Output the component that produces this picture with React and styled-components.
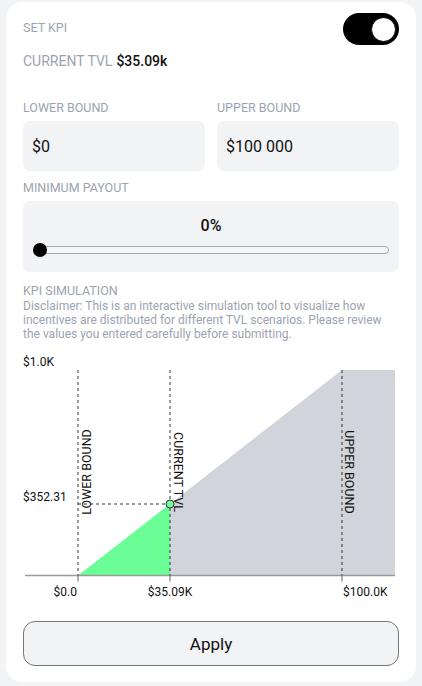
import React from 'react';
import styled, { createGlobalStyle } from 'styled-components';

const GlobalStyle = createGlobalStyle`
  html, body {
    margin: 0;
    padding: 0;
    background: #f2f3f5;
  }
  body {
    font-family: Roboto, "Noto Sans", Arial, sans-serif;
  }
`;

const Page = styled.div`
  padding: 2px 6px 4px;
`;

const Card = styled.div`
  box-sizing: border-box;
  width: 410px;
  background: #ffffff;
  border-radius: 16px;
  padding: 11px 17px 16px;
  display: flex;
  flex-direction: column;
`;

const HeaderRow = styled.div`
  display: flex;
  justify-content: space-between;
  align-items: flex-start;
`;

const Label = styled.div`
  font-size: 12.5px;
  line-height: 16px;
  color: #9ca3af;
  text-transform: uppercase;
  margin-top: ${p => p.$mt || 0}px;
`;

const Toggle = styled.div`
  box-sizing: border-box;
  width: 56px;
  height: 32px;
  border-radius: 16px;
  background: #000;
  display: flex;
  align-items: center;
  justify-content: ${p => (p.$on ? 'flex-end' : 'flex-start')};
  padding: 0 3px;
`;

const Knob = styled.div`
  box-sizing: border-box;
  width: 25px;
  height: 25px;
  border-radius: 50%;
  background: #fff;
  border: 1.5px solid #000;
`;

const TvlLine = styled.div`
  margin-top: 6px;
  font-size: 14px;
  line-height: 20px;
  color: #9ca3af;

  strong {
    color: #111;
    font-weight: 500;
    margin-left: 4px;
  }
`;

const BoundsGrid = styled.div`
  display: grid;
  grid-template-columns: 1fr 1fr;
  column-gap: 12px;
  margin-top: 29px;
`;

const Field = styled.div`
  display: flex;
  flex-direction: column;
  gap: 5px;
`;

const InputBox = styled.div`
  height: 50px;
  border-radius: 7px;
  background: #f2f3f5;
  display: flex;
  align-items: center;
  padding: 0 9px;
  font-size: 16px;
  color: #111;
`;

const PayoutBox = styled.div`
  box-sizing: border-box;
  height: 71px;
  margin-top: 5px;
  border-radius: 7px;
  background: #f2f3f5;
  padding: 15px 10px 0;
  display: flex;
  flex-direction: column;
  align-items: stretch;
`;

const Percent = styled.div`
  text-align: center;
  font-size: 16px;
  line-height: 20px;
  font-weight: 500;
  color: #111;
`;

const SliderRow = styled.div`
  position: relative;
  height: 16px;
  margin-top: 6px;
  display: flex;
  align-items: center;
`;

const Track = styled.div`
  box-sizing: border-box;
  flex: 1;
  height: 8px;
  border: 1px solid #a5a7ab;
  border-radius: 4px;
  background: #f5f6f7;
`;

const Thumb = styled.div`
  position: absolute;
  left: 0;
  top: 1px;
  width: 14px;
  height: 14px;
  border-radius: 50%;
  background: #000;
`;

const Disclaimer = styled.div`
  font-size: 12px;
  line-height: 14px;
  color: #9ca3af;
`;

const Chart = styled.svg`
  display: block;
  width: 376px;
  height: 264px;
  overflow: visible;
  font-family: Roboto, "Noto Sans", Arial, sans-serif;
`;

const ApplyButton = styled.button`
  margin-top: 16px;
  height: 45px;
  border-radius: 12px;
  border: 1px solid #767676;
  background: #f2f3f5;
  font-family: Roboto, "Noto Sans", Arial, sans-serif;
  font-size: 17px;
  color: #111;
  cursor: pointer;
`;

const PriceChart = () => {
  const top = 29;
  const base = 234.5;
  const xLow = 55;
  const xCur = 147;
  const xUp = 319;
  const xEnd = 372;
  const yCur = 163;
  const labelY = 131;

  return (
    <Chart viewBox="0 0 376 264">
      <polygon
        points={`${xCur},${yCur} ${xUp},${top} ${xEnd},${top} ${xEnd},${base} ${xCur},${base}`}
        fill="#d1d4db"
      />
      <polygon points={`${xLow},${base} ${xCur},${yCur} ${xCur},${base}`} fill="#6bfd96" />

      <line x1="2" y1={base} x2={xEnd} y2={base} stroke="#9a9a9a" strokeWidth="1.5" />

      {[xLow, xCur, xUp].map(x => (
        <g key={x}>
          <line x1={x} y1={top} x2={x} y2={base} stroke="#333" strokeWidth="1" strokeDasharray="3 3" />
          <line x1={x} y1={base} x2={x} y2={base + 6} stroke="#666" strokeWidth="1" />
        </g>
      ))}

      <line x1={xLow} y1={yCur} x2={xCur} y2={yCur} stroke="#333" strokeWidth="1" strokeDasharray="3 3" />
      <circle cx={xCur} cy={yCur} r="4" fill="#6bfd96" stroke="#333" strokeWidth="1" />

      <g fontSize="12" fill="#111">
        <text x="0" y="25">$1.0K</text>
        <text x="0" y="159.5">$352.31</text>
        <text x={xLow - 1} y="255" textAnchor="end">$0.0</text>
        <text x={xCur} y="255" textAnchor="middle">$35.09K</text>
        <text x={xUp + 1} y="255" textAnchor="start">$100.0K</text>
      </g>

      <g fontSize="12.5" fill="#111">
        <text transform={`translate(${xLow + 13} ${labelY}) rotate(-90)`} textAnchor="middle">
          LOWER BOUND
        </text>
        <text transform={`translate(${xCur + 4} ${labelY}) rotate(90)`} textAnchor="middle">
          CURRENT TVL
        </text>
        <text transform={`translate(${xUp + 3} ${labelY}) rotate(90)`} textAnchor="middle">
          UPPER BOUND
        </text>
      </g>
    </Chart>
  );
};

export default function App() {
  return (
    <Page>
      <GlobalStyle />
      <Card>
        <HeaderRow>
          <Label $mt={7}>Set KPI</Label>
          <Toggle $on>
            <Knob />
          </Toggle>
        </HeaderRow>

        <TvlLine>
          CURRENT TVL<strong>$35.09k</strong>
        </TvlLine>

        <BoundsGrid>
          <Field>
            <Label>Lower bound</Label>
            <InputBox>$0</InputBox>
          </Field>
          <Field>
            <Label>Upper bound</Label>
            <InputBox>$100 000</InputBox>
          </Field>
        </BoundsGrid>

        <Label $mt={9}>Minimum payout</Label>
        <PayoutBox>
          <Percent>0%</Percent>
          <SliderRow>
            <Track />
            <Thumb />
          </SliderRow>
        </PayoutBox>

        <Label $mt={11}>KPI simulation</Label>
        <Disclaimer>
          Disclaimer: This is an interactive simulation tool to visualize how incentives are distributed for
          different TVL scenarios. Please review the values you entered carefully before submitting.
        </Disclaimer>

        <PriceChart />

        <ApplyButton>Apply</ApplyButton>
      </Card>
    </Page>
  );
}
